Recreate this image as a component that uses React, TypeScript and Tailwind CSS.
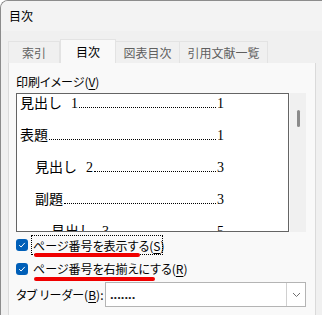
import React from "react";

function Row({ text, num, indent }: { text: string; num: string; indent: string }) {
  const parts = text.split(" ");
  return (
    <div className={`flex h-[32px] items-center text-[14px] leading-[16px] text-black w-[207px] ${indent}`}>
      <span className="whitespace-nowrap">{parts[0]}</span>
      {parts[1] && <span className="ml-[9px]">{parts[1]}</span>}
      <div className="flex-1 h-0 mt-[7px] border-b border-dotted border-black mx-[1px]" />
      <span>{num}</span>
    </div>
  );
}

function Check({ label, mn }: { label: string; mn: string }) {
  return (
    <div className="flex items-center">
      <div className="w-[12px] h-[12px] rounded-[3px] bg-[#005fb8] flex items-center justify-center">
        <svg width="8" height="8" viewBox="0 0 8 8">
          <path d="M1.2 4.2 L3.1 6 L6.8 1.9" stroke="white" strokeWidth="1" fill="none" />
        </svg>
      </div>
      <span className="ml-[4px] px-[1px] text-[12px] leading-[17px] whitespace-nowrap">
        {label}(<span className="underline underline-offset-2">{mn}</span>)
      </span>
    </div>
  );
}

export default function App() {
  return (
    <div className="font-['Noto_Sans_CJK_JP','Noto_Sans',sans-serif] [font-feature-settings:'palt'] w-[322px] h-[315px] overflow-hidden bg-[#f0f0f0] border-t border-l border-[#8c8c8c] rounded-tl-[8px] flex flex-col text-black">
      <div className="h-[30px] shrink-0 bg-[#f3f3f3] pl-[8px] flex items-center text-[12px]">目次</div>
      <div className="flex-1 flex flex-col pl-[7px] pr-[6px] pt-[8px]">
        <div className="flex items-end h-[24px] text-[12px] [font-feature-settings:normal]">
          <div className="w-[52px] h-[22px] border border-b-0 border-[#e3e3e3] bg-[#f0f0f0] text-[#5f5f5f] flex items-center justify-center">索引</div>
          <div className="w-[56px] h-[24px] border border-b-0 border-[#e3e3e3] bg-[#f9f9f9] flex items-center justify-center">目次</div>
          <div className="w-[64px] h-[22px] border border-b-0 border-l-0 border-[#e3e3e3] bg-[#f0f0f0] text-[#5f5f5f] flex items-center justify-center">図表目次</div>
          <div className="w-[88px] h-[22px] border border-b-0 border-l-0 border-[#e3e3e3] bg-[#f0f0f0] text-[#5f5f5f] flex items-center justify-center">引用文献一覧</div>
        </div>
        <div className="flex-1 bg-[#f9f9f9] border-l border-r border-[#dadada] pl-[7px] pt-[11px]">
          <div className="text-[12px] leading-[16px] mb-[3px]">
            印刷イメージ(<span className="underline underline-offset-2">V</span>)
          </div>
          <div className="flex">
            <div className="w-[273px] h-[139px] border border-[#646464] bg-white overflow-hidden">
              <div className="-mt-[6px] font-['Liberation_Serif','Noto_Sans_CJK_JP',serif] [font-feature-settings:normal]">
                <Row text="見出し 1" num="1" indent="pl-[3px]" />
                <Row text="表題" num="1" indent="pl-[3px]" />
                <Row text="見出し 2" num="3" indent="pl-[18px]" />
                <Row text="副題" num="3" indent="pl-[18px]" />
                <Row text="見出し 3" num="5" indent="pl-[34px]" />
              </div>
            </div>
            <div className="ml-[1px] w-[16px] h-[139px] bg-[#f0f0f0] flex justify-center pt-[17px]">
              <div className="w-[3px] h-[17px] rounded-full bg-[#8a8a8a]" />
            </div>
          </div>
          <div className="relative mt-[3px] h-[20px] flex items-center">
            <Check label="ページ番号を表示する" mn="S" />
            <div className="absolute left-[15px] top-0 w-[132px] h-[20px] border border-dotted border-black" />
            <div className="absolute left-[18px] top-[18px] w-[106px] h-[4px] rounded-full bg-[#f00000]" />
          </div>
          <div className="relative mt-[3px] h-[21px] flex items-center">
            <Check label="ページ番号を右揃えにする" mn="R" />
            <div className="absolute left-[18px] top-[19px] w-[121px] h-[4px] rounded-full bg-[#f00000]" />
          </div>
          <div className="mt-[3px] flex items-center">
            <div className="w-[89px] text-[12px] leading-[16px] whitespace-nowrap">
              タブ リーダー(<span className="underline underline-offset-2">B</span>):
            </div>
            <div className="w-[201px] h-[25px] border border-[#b4b4b4] bg-white flex">
              <div className="flex-1 pl-[4px] flex items-center text-[13px] font-bold text-[#222] font-['Liberation_Sans',sans-serif]">.......</div>
              <div className="w-[19px] border-l border-[#d0d0d0] bg-white flex items-center justify-center">
                <svg width="9" height="6" viewBox="0 0 9 6">
                  <path d="M1 1 L4.5 4.5 L8 1" stroke="#707070" strokeWidth="1" fill="none" />
                </svg>
              </div>
            </div>
          </div>
        </div>
      </div>
    </div>
  );
}
